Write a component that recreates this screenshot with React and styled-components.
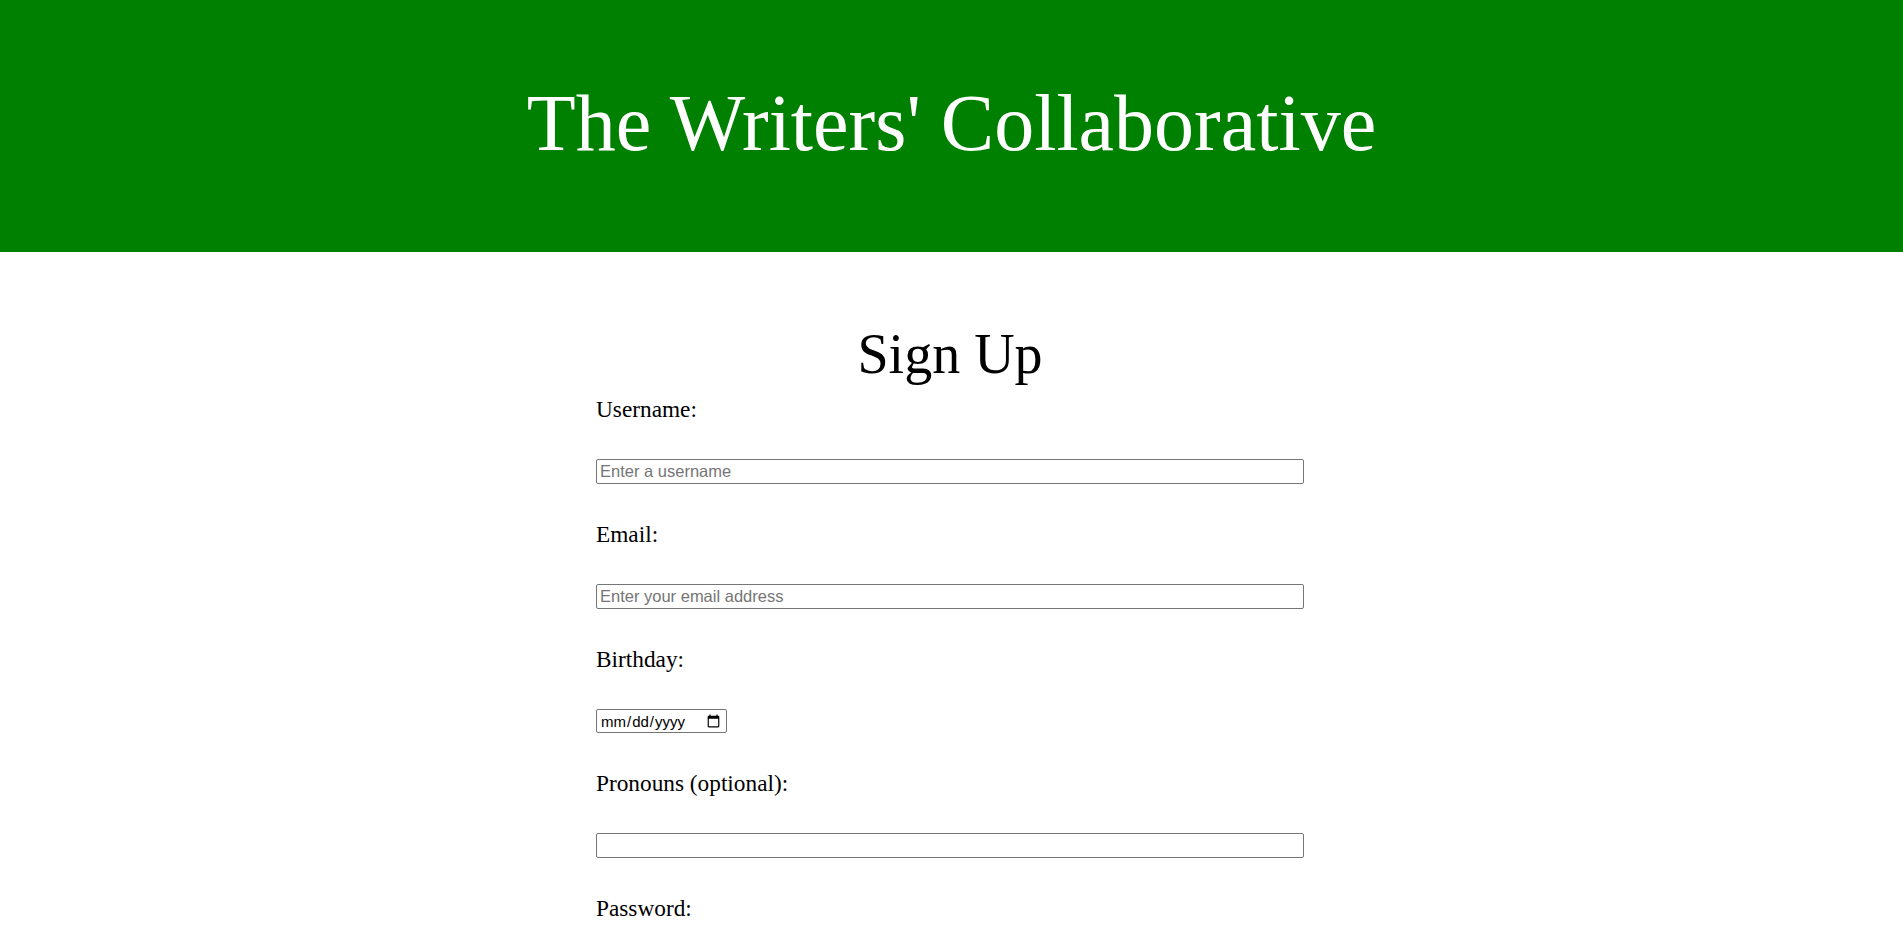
import styled, { createGlobalStyle } from "styled-components"

const GlobalStyle = createGlobalStyle`
  body {
    margin: 0;
    font-family: "Liberation Serif", "Times New Roman", serif;
    background-color: #FFFFFF;
    color: #000000;
  }
`

const fields = [
  { id: "username", label: "Username:", type: "text", placeholder: "Enter a username" },
  { id: "email", label: "Email:", type: "email", placeholder: "Enter your email address" },
  { id: "birthday", label: "Birthday:", type: "date" },
  { id: "pronouns", label: "Pronouns (optional):", type: "text" },
  { id: "password", label: "Password:", type: "password" },
]

export default function App() {
  return (
    <>
      <GlobalStyle />
      <Header>
        <SiteTitle>The Writers' Collaborative</SiteTitle>
      </Header>
      <Main>
        <PageTitle>Sign Up</PageTitle>
        <Form onSubmit={(e) => e.preventDefault()}>
          {fields.map((field) => (
            <Field key={field.id}>
              <Label htmlFor={field.id}>{field.label}</Label>
              {field.type === "date"
                ? <DateInput id={field.id} type="date" />
                : <TextInput id={field.id} type={field.type} placeholder={field.placeholder} />}
            </Field>
          ))}
        </Form>
      </Main>
    </>
  )
}

const Header = styled.header`
  background-color: #008000;
  height: 252px;
  box-sizing: border-box;
  padding-top: 77px;
  text-align: center;
`

const SiteTitle = styled.h1`
  margin: 0;
  font-family: "Liberation Serif", "Times New Roman", serif;
  font-weight: 400;
  font-size: 80px;
  line-height: 92px;
  color: #FFFFFF;
`

const Main = styled.main`
  display: flex;
  flex-direction: column;
  align-items: center;
  padding-top: 70px;
  padding-right: 3px;
  padding-bottom: 60px;
`

const PageTitle = styled.h2`
  margin: 0;
  font-weight: 400;
  font-size: 56px;
  line-height: 64px;
`

const Form = styled.form`
  width: 708px;
  display: flex;
  flex-direction: column;
  gap: 38.5px;
  margin-top: 11.5px;
`

const Field = styled.div`
  display: flex;
  flex-direction: column;
  align-items: flex-start;
  gap: 38.5px;
`

const Label = styled.label`
  font-size: 23.3px;
  line-height: 23px;
`

const TextInput = styled.input`
  box-sizing: border-box;
  width: 100%;
  height: 25px;
  margin: 0;
  padding: 1px 3px;
  border: 1px solid #767676;
  border-radius: 2px;
  font-family: "Liberation Sans", Arial, sans-serif;
  font-size: 16.5px;
  color: #000000;

  &::placeholder {
    color: #757575;
  }
`

const DateInput = styled.input`
  box-sizing: border-box;
  width: 131px;
  height: 24px;
  margin: 0;
  padding: 1px 3px;
  border: 1px solid #767676;
  border-radius: 2px;
  font-family: "Liberation Sans", Arial, sans-serif;
  font-size: 15px;
`
